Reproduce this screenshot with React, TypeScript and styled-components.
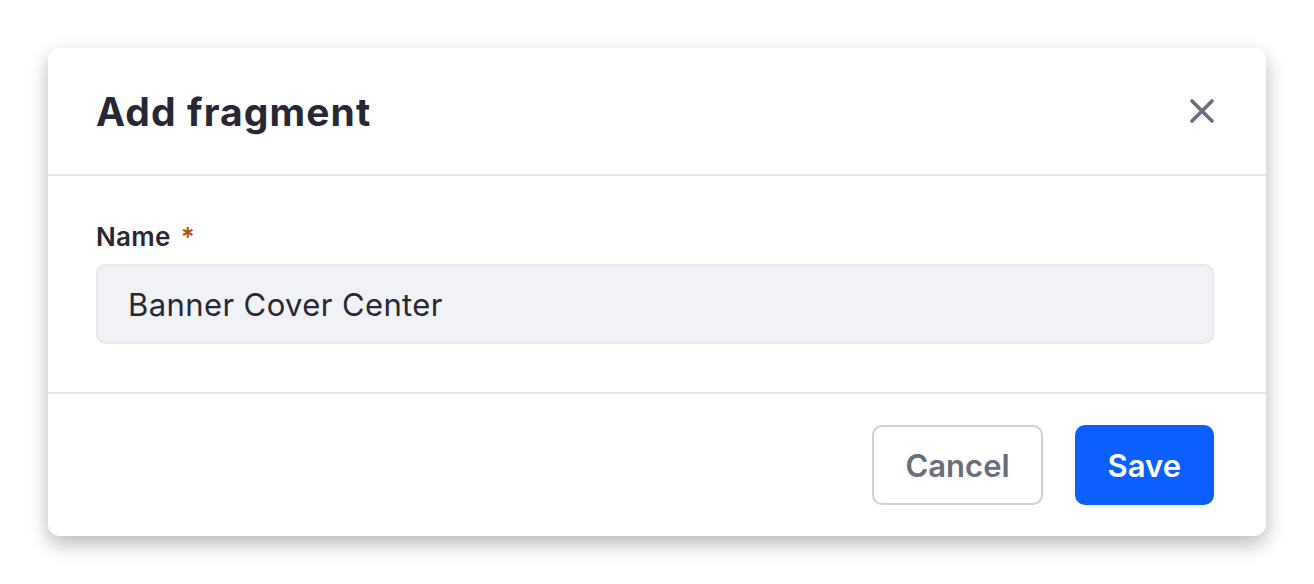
import React from 'react'
import styled, { createGlobalStyle } from 'styled-components'

const GlobalStyle = createGlobalStyle`
  * { box-sizing: border-box; }
  body {
    margin: 0;
    background: #ffffff;
    font-family: Inter, "Noto Sans", "Liberation Sans", sans-serif;
    color: #272833;
  }
`

const Page = styled.div`
  padding: 48px;
`

const Modal = styled.div`
  background: #ffffff;
  border-radius: 12px;
  box-shadow: 0 8px 20px rgba(0, 0, 0, 0.28);
  overflow: hidden;
`

const Header = styled.header`
  display: flex;
  align-items: center;
  justify-content: space-between;
  height: 128px;
  padding: 0 52px 0 48px;
  border-bottom: 2px solid #e7e7ed;
`

const Title = styled.h1`
  margin: 0;
  font-size: 39px;
  font-weight: 700;
  color: #272833;
  letter-spacing: 1.1px;
`

const CloseButton = styled.button`
  display: flex;
  align-items: center;
  justify-content: center;
  width: 24px;
  height: 24px;
  padding: 0;
  border: none;
  background: none;
`

const Body = styled.div`
  padding: 46px 52px 48px 48px;
  border-bottom: 2px solid #e7e7ed;
`

const Label = styled.label`
  display: block;
  height: 32px;
  margin-bottom: 10px;
  font-size: 26px;
  font-weight: 600;
  line-height: 30px;
  letter-spacing: 0.3px;
  color: #272833;
`

const Required = styled.span`
  color: #b95000;
  margin-left: 10px;
`

const Input = styled.input`
  display: block;
  width: 100%;
  height: 80px;
  padding: 0 30px;
  border: 2px solid #e7e7ed;
  border-radius: 10px;
  background: #f1f2f5;
  font-family: inherit;
  font-size: 31px;
  letter-spacing: 0.4px;
  color: #272833;
  outline: none;
`

const Footer = styled.footer`
  display: flex;
  justify-content: flex-end;
  gap: 32px;
  padding: 31px 52px 31px 48px;
`

const Button = styled.button<{ $primary?: boolean }>`
  height: 80px;
  padding: 0 31px;
  border-radius: 10px;
  font-family: inherit;
  font-size: 31px;
  font-weight: 600;
  letter-spacing: 0;
  border: 2px solid ${p => (p.$primary ? '#0b5fff' : '#cdced9')};
  background: ${p => (p.$primary ? '#0b5fff' : '#ffffff')};
  color: ${p => (p.$primary ? '#ffffff' : '#6b6c7e')};
`

const App = () => {
  return (
    <>
      <GlobalStyle />
      <Page>
        <Modal>
          <Header>
            <Title>Add fragment</Title>
            <CloseButton aria-label="Close">
              <svg width="24" height="24" viewBox="0 0 24 24">
                <path d="M2 2L22 22M22 2L2 22" stroke="#6b6c7e" strokeWidth="3.6" strokeLinecap="round" />
              </svg>
            </CloseButton>
          </Header>
          <Body>
            <Label htmlFor="name">
              Name<Required>*</Required>
            </Label>
            <Input id="name" defaultValue="Banner Cover Center" />
          </Body>
          <Footer>
            <Button>Cancel</Button>
            <Button $primary>Save</Button>
          </Footer>
        </Modal>
      </Page>
    </>
  )
}

export default App
